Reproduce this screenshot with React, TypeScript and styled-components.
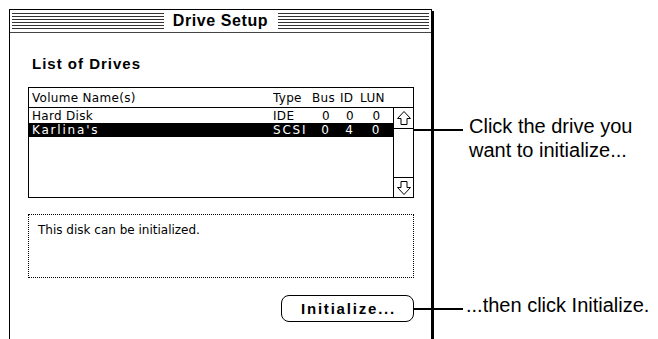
import React from "react";
import styled, { createGlobalStyle } from "styled-components";

const GlobalStyle = createGlobalStyle`
  html, body { margin: 0; padding: 0; background: #fff; }
  body { font-family: "DejaVu Sans", sans-serif; color: #000; }
`;

const Page = styled.div`
  display: flex;
  align-items: flex-start;
  width: 658px;
  height: 339px;
  padding: 9px 0 0 9px;
  box-sizing: border-box;
  overflow: hidden;
`;

const Window = styled.div`
  flex: none;
  width: 423px;
  height: 380px;
  box-sizing: border-box;
  border: 1px solid #000;
  box-shadow: 2px 2px 0 #000;
  background: #fff;
  display: flex;
  flex-direction: column;
`;

const TitleBar = styled.div`
  height: 23px;
  box-sizing: border-box;
  padding: 3px 2px;
  border-bottom: 1px solid #444;
  display: flex;
`;

const Stripes = styled.div`
  flex: 1;
  height: 16px;
  background: repeating-linear-gradient(
    to bottom,
    #333 0px,
    #333 1.3px,
    #fff 1.3px,
    #fff 3px
  );
  display: flex;
  justify-content: center;
`;

const TitleLabel = styled.div`
  width: 114px;
  background: #fff;
  text-align: center;
  font: bold 16px/16px "Liberation Sans", Arial, sans-serif;
  letter-spacing: 0.6px;
`;

const Content = styled.div`
  padding: 22px 17px 0 18px;
  display: flex;
  flex-direction: column;
`;

const Heading = styled.h2`
  margin: 0;
  padding-left: 4px;
  font: bold 15px/18px "Liberation Sans", Arial, sans-serif;
  letter-spacing: 1px;
`;

const ListBox = styled.div`
  margin-top: 14px;
  border: 1px solid #000;
  font: 12px/14px "DejaVu Sans", sans-serif;
  letter-spacing: 0.3px;
`;

const columns = "241px 39px 28px 20px 33px";

const ListHeader = styled.div`
  display: grid;
  grid-template-columns: ${columns} 20px;
  align-items: center;
  height: 20px;
  box-sizing: border-box;
  padding-left: 3px;
  border-bottom: 1px solid #000;
`;

const ListBody = styled.div`
  display: flex;
  height: 89px;
`;

const Rows = styled.div`
  flex: 1;
  padding-top: 1px;
`;

const Row = styled.div<{ $selected?: boolean }>`
  display: grid;
  grid-template-columns: ${columns};
  align-items: center;
  height: 14px;
  padding-left: 3px;
  background: ${(p) => (p.$selected ? "#000" : "#fff")};
  color: ${(p) => (p.$selected ? "#fff" : "#000")};
  letter-spacing: ${(p) => (p.$selected ? "1.8px" : "0.3px")};
`;

const Cell = styled.span<{ $center?: boolean }>`
  text-align: ${(p) => (p.$center ? "center" : "left")};
  white-space: nowrap;
  overflow: hidden;
`;

const Scrollbar = styled.div`
  width: 19px;
  border-left: 1px solid #000;
  display: flex;
  flex-direction: column;
  justify-content: space-between;
`;

const ArrowBox = styled.div<{ $down?: boolean }>`
  height: ${(p) => (p.$down ? "20px" : "21px")};
  box-sizing: border-box;
  ${(p) =>
    p.$down ? "border-top: 1px solid #000;" : "border-bottom: 1px solid #000;"}
  display: flex;
  align-items: center;
  justify-content: center;
`;

const Message = styled.div`
  margin-top: 16px;
  height: 64px;
  box-sizing: border-box;
  border: 1px dotted #000;
  padding: 8px 9px;
  font: 12px/14px "DejaVu Sans", sans-serif;
`;

const ButtonRow = styled.div`
  margin-top: 17px;
  display: flex;
  justify-content: flex-end;
`;

const MacButton = styled.button`
  width: 133px;
  height: 27px;
  padding: 0 0 0 2px;
  border: 1px solid #000;
  border-radius: 8px;
  background: #fff;
  color: #000;
  font: bold 15px/25px "Liberation Sans", Arial, sans-serif;
  letter-spacing: 1.8px;
`;

const Annotations = styled.div`
  flex: 1;
  display: flex;
  flex-direction: column;
`;

const Callout = styled.div<{ $top: number; $indent: number }>`
  position: relative;
  margin-top: ${(p) => p.$top}px;
  padding-left: ${(p) => p.$indent}px;
  font: 20px/24px "Liberation Sans", Arial, sans-serif;
  color: #000;
`;

const Leader = styled.div`
  position: absolute;
  top: 15px;
  left: -19px;
  width: 50px;
  height: 2px;
  background: #000;
`;

const Arrow = ({ down }: { down?: boolean }) => (
  <svg
    width="16"
    height="16"
    viewBox="0 0 16 16"
    style={down ? { transform: "scaleY(-1)" } : undefined}
  >
    <polygon
      points="8,1.5 14.5,8.5 11,8.5 11,14.5 5,14.5 5,8.5 1.5,8.5"
      fill="#fff"
      stroke="#000"
      strokeWidth="1"
    />
  </svg>
);

const drives = [
  { name: "Hard Disk", type: "IDE", bus: "0", id: "0", lun: "0", selected: false },
  { name: "Karlina's", type: "SCSI", bus: "0", id: "4", lun: "0", selected: true },
];

export default function App() {
  return (
    <>
      <GlobalStyle />
      <Page>
        <Window>
          <TitleBar>
            <Stripes>
              <TitleLabel>Drive Setup</TitleLabel>
            </Stripes>
          </TitleBar>
          <Content>
            <Heading>List of Drives</Heading>
            <ListBox>
              <ListHeader>
                <Cell>Volume Name(s)</Cell>
                <Cell>Type</Cell>
                <Cell>Bus</Cell>
                <Cell>ID</Cell>
                <Cell>LUN</Cell>
                <span />
              </ListHeader>
              <ListBody>
                <Rows>
                  {drives.map((d) => (
                    <Row key={d.name} $selected={d.selected}>
                      <Cell>{d.name}</Cell>
                      <Cell>{d.type}</Cell>
                      <Cell $center>{d.bus}</Cell>
                      <Cell $center>{d.id}</Cell>
                      <Cell $center>{d.lun}</Cell>
                    </Row>
                  ))}
                </Rows>
                <Scrollbar>
                  <ArrowBox>
                    <Arrow />
                  </ArrowBox>
                  <ArrowBox $down>
                    <Arrow down />
                  </ArrowBox>
                </Scrollbar>
              </ListBody>
            </ListBox>
            <Message>This disk can be initialized.</Message>
            <ButtonRow>
              <MacButton>Initialize...</MacButton>
            </ButtonRow>
          </Content>
        </Window>
        <Annotations>
          <Callout $top={105} $indent={37}>
            <Leader />
            Click the drive you
            <br />
            want to initialize...
          </Callout>
          <Callout $top={131} $indent={34}>
            <Leader />
            ...then click Initialize.
          </Callout>
        </Annotations>
      </Page>
    </>
  );
}
